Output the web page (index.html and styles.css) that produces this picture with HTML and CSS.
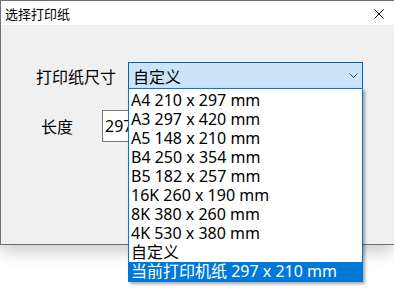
FILE: index.html
```html
<!DOCTYPE html>
<html lang="zh-CN">
<head>
  <meta charset="UTF-8" />
  <title>选择打印纸</title>
  <link rel="stylesheet" href="styles.css">
</head>
<body>

  <div class="window">
    <div class="titlebar">
      <span class="title">选择打印纸</span>
      <svg class="close" width="10" height="10" viewBox="0 0 10 10">
        <path d="M0.5 0.5 L9.5 9.5 M9.5 0.5 L0.5 9.5" stroke="#000" stroke-width="1" fill="none" />
      </svg>
    </div>

    <div class="client">
      <div class="row row-size">
        <span class="label">打印纸尺寸</span>
        <div class="combo">
          <div class="combo-box">
            <span>自定义</span>
            <svg class="chevron" width="9" height="5" viewBox="0 0 9 5">
              <path d="M0.5 0.5 L4.5 4.5 L8.5 0.5" stroke="#444" stroke-width="1" fill="none" />
            </svg>
          </div>
          <ul class="combo-list">
            <li>A4 210 x 297 mm</li>
            <li>A3 297 x 420 mm</li>
            <li>A5 148 x 210 mm</li>
            <li>B4 250 x 354 mm</li>
            <li>B5 182 x 257 mm</li>
            <li>16K 260 x 190 mm</li>
            <li>8K 380 x 260 mm</li>
            <li>4K 530 x 380 mm</li>
            <li>自定义</li>
            <li class="selected">当前打印机纸 297 x 210 mm</li>
          </ul>
        </div>
      </div>

      <div class="row row-length">
        <span class="label">长度</span>
        <div class="textbox">297</div>
      </div>
    </div>
  </div>

</body>
</html>
```

FILE: styles.css
```css
body {
  margin: 0;
  width: 394px;
  height: 292px;
  overflow: hidden;
  background-color: #fff;
  font-family: "Noto Sans", "Noto Sans CJK SC", sans-serif;
  color: #000;
}
.window {
  width: 393px;
  height: 243px;
  border: 1px solid #707070;
  border-right: none;
  background-color: #f0f0f0;
  box-shadow: 0 6px 16px rgba(0, 0, 0, 0.22);
}
.titlebar {
  height: 24px;
  background-color: #fff;
  display: flex;
  align-items: center;
  justify-content: space-between;
  padding: 0 10px 0 4px;
}
.title {
  font-size: 13px;
  font-family: "Noto Sans CJK SC", sans-serif;
}
.close {
  display: block;
  margin-top: 1px;
}
.client {
  padding-top: 37px;
}
.row {
  display: flex;
  align-items: center;
  font-size: 16px;
}
.label {
  font-family: "Noto Sans CJK SC", sans-serif;
}
.row-size {
  padding-left: 35px;
  height: 27px;
}
.row-size .label {
  width: 92px;
}
.row-length {
  margin-top: 21px;
  padding-left: 40px;
  height: 32px;
}
.row-length .label {
  width: 61px;
}
.combo {
  position: relative;
  width: 235px;
}
.combo-box {
  height: 25px;
  border: 1px solid #0063b1;
  background-color: #cce4f7;
  display: flex;
  align-items: center;
  justify-content: space-between;
  padding: 0 4px 0 4px;
  font-family: "Noto Sans CJK SC", sans-serif;
}
.chevron {
  display: block;
}
.combo-list {
  position: absolute;
  top: 26px;
  left: 0;
  width: 233px;
  margin: 0;
  padding: 2px 0 0 0;
  list-style: none;
  background-color: #fff;
  border: 1px solid #0078d7;
  box-shadow: 2px 2px 3px rgba(0, 0, 0, 0.35);
  z-index: 2;
}
.combo-list li {
  height: 19px;
  line-height: 19px;
  padding-left: 2px;
  white-space: nowrap;
}
.combo-list li.selected {
  background-color: #0078d7;
  color: #fff;
}
.textbox {
  width: 60px;
  height: 30px;
  line-height: 30px;
  border: 1px solid #7a7a7a;
  background-color: #fff;
  padding-left: 2px;
}
```
